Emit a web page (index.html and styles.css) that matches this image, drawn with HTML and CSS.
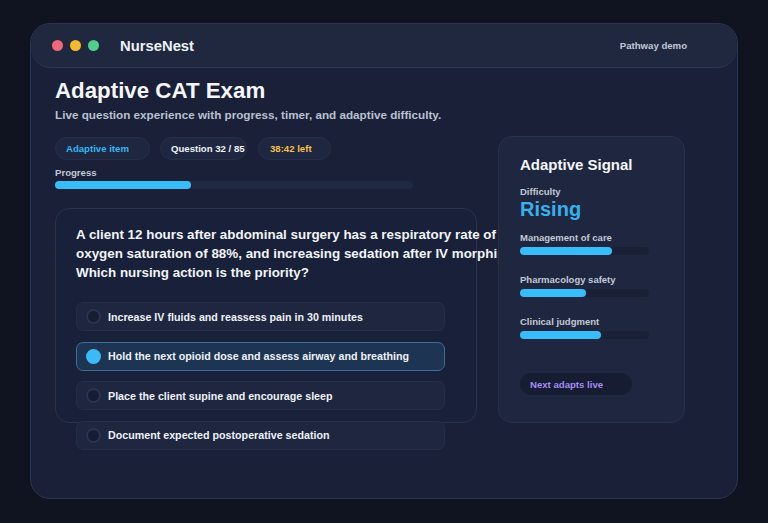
FILE: index.html
```html
<!DOCTYPE html>
<html lang="en">
<head>
  <meta charset="UTF-8" />
  <meta name="viewport" content="width=device-width, initial-scale=1" />
  <title>NurseNest - Adaptive CAT Exam</title>
  <link rel="stylesheet" href="styles.css">
</head>
<body>

<div class="window">
  <header class="topbar">
    <div class="dots">
      <span class="dot red"></span>
      <span class="dot yellow"></span>
      <span class="dot green"></span>
    </div>
    <strong class="brand">NurseNest</strong>
    <span class="demo">Pathway demo</span>
  </header>

  <main class="content">
    <h1>Adaptive CAT Exam</h1>
    <p class="lead">Live question experience with progress, timer, and adaptive difficulty.</p>

    <div class="layout">
      <div class="exam">
        <div class="pills">
          <span class="pill blue">Adaptive item</span>
          <span class="pill count">Question 32 / 85</span>
          <span class="pill amber">38:42 left</span>
        </div>
        <div class="progress-label">Progress</div>
        <div class="track wide"><div class="fill" style="width:38%"></div></div>

        <div class="question-card">
          <div class="question-clip">
            <p class="question">A client 12 hours after abdominal surgery has a respiratory rate of 8/min, oxygen saturation of 88%, and increasing sedation after IV morphine. Which nursing action is the priority?</p>
          </div>
          <div class="options">
            <div class="option"><span class="radio"></span>Increase IV fluids and reassess pain in 30 minutes</div>
            <div class="option selected"><span class="radio"></span>Hold the next opioid dose and assess airway and breathing</div>
            <div class="option"><span class="radio"></span>Place the client supine and encourage sleep</div>
            <div class="option"><span class="radio"></span>Document expected postoperative sedation</div>
          </div>
        </div>
      </div>

      <aside class="signal">
        <h2>Adaptive Signal</h2>
        <div class="small-label">Difficulty</div>
        <div class="rising">Rising</div>

        <div class="metric">
          <div class="small-label">Management of care</div>
          <div class="track"><div class="fill" style="width:71%"></div></div>
        </div>
        <div class="metric">
          <div class="small-label">Pharmacology safety</div>
          <div class="track"><div class="fill" style="width:51%"></div></div>
        </div>
        <div class="metric">
          <div class="small-label">Clinical judgment</div>
          <div class="track"><div class="fill" style="width:63%"></div></div>
        </div>

        <span class="live">Next adapts live</span>
      </aside>
    </div>
  </main>
</div>

</body>
</html>
```

FILE: styles.css
```css
* { box-sizing: border-box; }
body {
  margin: 0;
  padding: 23px 30px 24px;
  background: #0f1420;
  font-family: 'Liberation Sans', Arial, sans-serif;
  color: #eef2f8;
}
.window {
  height: 476px;
  background: #1a2037;
  border: 1px solid #2c3550;
  border-radius: 20px;
  overflow: hidden;
}
.topbar {
  display: flex; align-items: center;
  height: 44px; padding: 0 22px 0 21px;
  background: #202840;
  border-bottom: 1px solid #2e3852;
  border-radius: 20px;
}
.dots { display: flex; gap: 7px; }
.dot { width: 11px; height: 11px; border-radius: 50%; }
.red { background: #f0667a; }
.yellow { background: #f5b82e; }
.green { background: #4fd08c; }
.brand { margin-left: 21px; font-size: 14.8px; color: #eef2f8; }
.demo {
  margin-left: auto; margin-right: 28px;
  font-size: 9.6px; font-weight: bold; color: #c2c9d8;
}
.content { padding: 10px 24px 0; }
h1 {
  margin: 0; font-size: 22.3px; line-height: 26px;
  color: #f4f6fa;
}
.lead {
  margin: 4px 0 0; font-size: 11.7px; font-weight: bold;
  color: #b9c1d0;
}
.layout {
  display: flex; align-items: flex-start; gap: 21px;
  margin-top: 15px;
}
.exam { width: 422px; flex: none; }
.pills { display: flex; gap: 10px; margin-top: 1px; }
.pill {
  height: 23px; padding: 0 0 0 10px;
  display: inline-flex; align-items: center;
  background: #1f2740; border: 1px solid #262f48;
  border-radius: 999px;
  font-size: 9.6px; font-weight: bold; color: #eef2f8;
}
.pill.blue { width: 95px; color: #38b6f0; }
.pill.count { width: 87px; }
.pill.amber { width: 73px; margin-left: 1px; padding-left: 11px; color: #f6c04a; }
.progress-label {
  margin-top: 7px; font-size: 9.6px; font-weight: bold;
  color: #c2c9d8;
}
.track {
  height: 8px; margin-top: 3px;
  background: #202942; border-radius: 999px;
}
.track.wide { width: 358px; }
.fill { height: 100%; background: #38bdf8; border-radius: 999px; }

.question-card {
  height: 215px; margin-top: 19px;
  padding: 16px 20px;
  background: #18203a;
  border: 1px solid #2a334c;
  border-radius: 14px;
}
/* the prompt runs on under the side panel, so cut it at the panel edge */
.question-clip { width: 422px; overflow: hidden; }
.question {
  width: 470px; margin: 0;
  font-size: 13.4px; line-height: 19px; font-weight: bold;
  color: #f2f4f8;
}
.options {
  display: flex; flex-direction: column; gap: 10.5px;
  width: 369px; margin-top: 20px;
}
.option {
  display: flex; align-items: center; gap: 7px;
  height: 29px; padding: 0 9px;
  background: #1f2740; border: 1px solid #252e47;
  border-radius: 7px;
  font-size: 10.7px; font-weight: bold; color: #eef1f7;
}
.radio {
  width: 15px; height: 15px; flex: none;
  border-radius: 50%;
  background: #161d33; border: 2px solid #2a3350;
}
.option.selected { background: #1d3552; border-color: #3c6f96; }
.option.selected .radio { background: #3cbaf8; border-color: #3cbaf8; }

.signal {
  position: relative; z-index: 1;
  width: 187px; height: 287px;
  padding: 19px 21px;
  background: #1f2740;
  border: 1px solid #29324b;
  border-radius: 14px;
}
h2 { margin: 0; font-size: 15px; line-height: 18px; color: #f4f6fa; }
.small-label {
  font-size: 9.5px; font-weight: bold; color: #c2c9d8;
}
.signal h2 + .small-label { margin-top: 12px; }
.rising {
  margin-top: 1px;
  font-size: 20px; line-height: 22px; font-weight: bold;
  color: #38b0ec;
}
.metric { margin-top: 12px; }
.metric + .metric { margin-top: 19px; }
.metric .track { width: 129px; margin-top: 4px; background: #1a2137; }
.live {
  display: inline-flex; align-items: center;
  width: 112px; height: 22px; margin-top: 34px; padding-left: 10px;
  background: #161c31; border-radius: 999px;
  font-size: 9.6px; font-weight: bold; color: #a48cf2;
}
```
